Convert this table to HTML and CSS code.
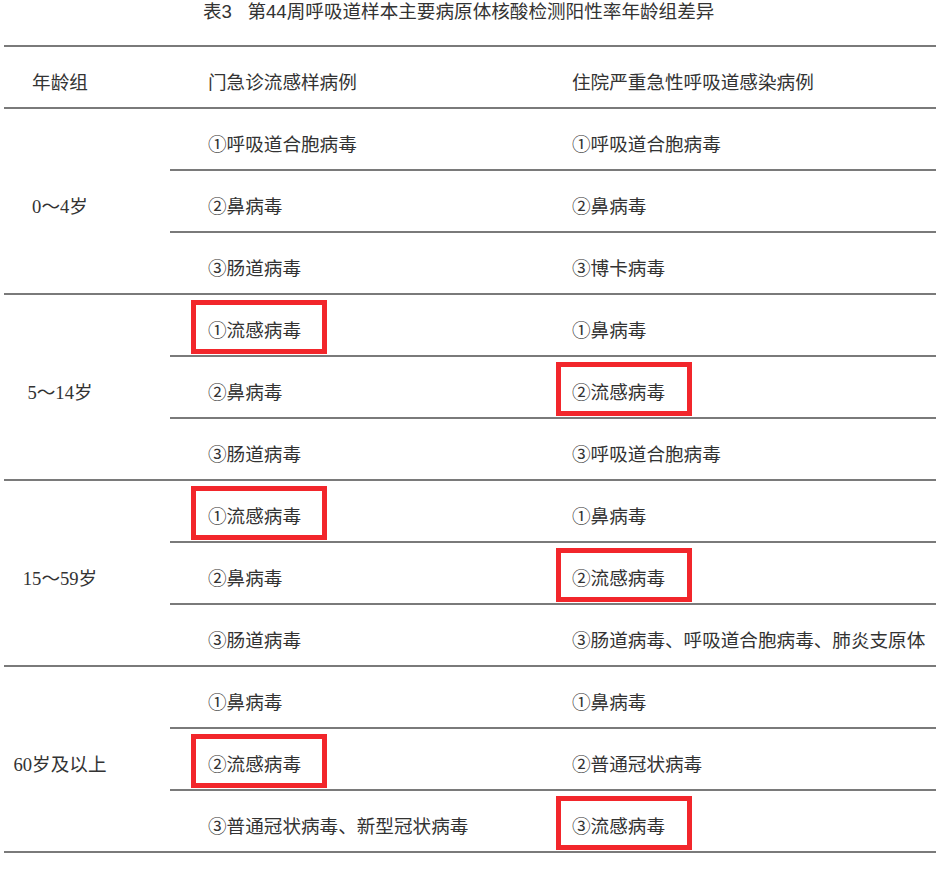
FILE: index.html
```html
<!DOCTYPE html>
<html lang="zh-CN">
<head>
<meta charset="utf-8">
<title>表3</title>
<link rel="stylesheet" href="styles.css">
</head>
<body>
<div class="title">表3&nbsp;&nbsp;&nbsp;第44周呼吸道样本主要病原体核酸检测阳性率年龄组差异</div>
<div class="table">
  <div class="head">
    <div class="age">年龄组</div>
    <div class="c2">门急诊流感样病例</div>
    <div class="c3">住院严重急性呼吸道感染病例</div>
  </div>

  <div class="group">
    <div class="age">0～4岁</div>
    <div class="rows">
      <div class="row"><div class="c2">①呼吸道合胞病毒</div><div class="c3">①呼吸道合胞病毒</div></div>
      <div class="row"><div class="c2">②鼻病毒</div><div class="c3">②鼻病毒</div></div>
      <div class="row"><div class="c2">③肠道病毒</div><div class="c3">③博卡病毒</div></div>
    </div>
  </div>

  <div class="group">
    <div class="age">5～14岁</div>
    <div class="rows">
      <div class="row"><div class="c2 hl">①流感病毒</div><div class="c3">①鼻病毒</div></div>
      <div class="row"><div class="c2">②鼻病毒</div><div class="c3 hl">②流感病毒</div></div>
      <div class="row"><div class="c2">③肠道病毒</div><div class="c3">③呼吸道合胞病毒</div></div>
    </div>
  </div>

  <div class="group">
    <div class="age">15～59岁</div>
    <div class="rows">
      <div class="row"><div class="c2 hl">①流感病毒</div><div class="c3">①鼻病毒</div></div>
      <div class="row"><div class="c2">②鼻病毒</div><div class="c3 hl">②流感病毒</div></div>
      <div class="row"><div class="c2">③肠道病毒</div><div class="c3">③肠道病毒、呼吸道合胞病毒、肺炎支原体</div></div>
    </div>
  </div>

  <div class="group">
    <div class="age">60岁及以上</div>
    <div class="rows">
      <div class="row"><div class="c2">①鼻病毒</div><div class="c3">①鼻病毒</div></div>
      <div class="row"><div class="c2 hl">②流感病毒</div><div class="c3">②普通冠状病毒</div></div>
      <div class="row"><div class="c2">③普通冠状病毒、新型冠状病毒</div><div class="c3 hl">③流感病毒</div></div>
    </div>
  </div>
</div>
</body>
</html>
```

FILE: styles.css
```css
html, body {
  margin: 0;
  padding: 0;
  background: #ffffff;
}

body {
  font-family: "Liberation Serif", "Noto Sans CJK SC", serif;
  font-size: 18.6px;
  color: #333333;
  width: 936px;
  overflow: hidden;
}

.title {
  height: 45px;
  line-height: 24px;
  padding-left: 203px;
  white-space: nowrap;
  font-family: "Liberation Sans", "Noto Sans CJK SC", sans-serif;
}

.table {
  margin-left: 4px;
  width: 940px;
}

.head {
  display: flex;
  height: 60px;
  border-top: 2px solid #7a7a7a;
  border-bottom: 2px solid #7a7a7a;
}

.group {
  display: flex;
  border-bottom: 2px solid #7a7a7a;
}

.age {
  width: 112px;
  padding-right: 54px;
  display: flex;
  align-items: center;
  justify-content: center;
  padding-top: 6px;
  box-sizing: content-box;
  white-space: nowrap;
}

.rows {
  flex: 1;
  display: flex;
  flex-direction: column;
}

.row {
  display: flex;
  height: 60px;
  border-bottom: 2px solid #7a7a7a;
}

.row:last-child {
  border-bottom: none;
}

.c2, .c3 {
  position: relative;
  display: flex;
  align-items: center;
  padding-top: 6px;
  white-space: nowrap;
  box-sizing: border-box;
}

.c2 {
  width: 365px;
  padding-left: 38px;
}

.c3 {
  flex: 1;
  padding-left: 37px;
}

.head .c2, .head .c3 {
  padding-top: 6px;
}

.hl::after {
  content: "";
  position: absolute;
  left: 21px;
  top: 5px;
  width: 136px;
  height: 54px;
  border: 5px solid #f2262b;
  box-sizing: border-box;
}
```
